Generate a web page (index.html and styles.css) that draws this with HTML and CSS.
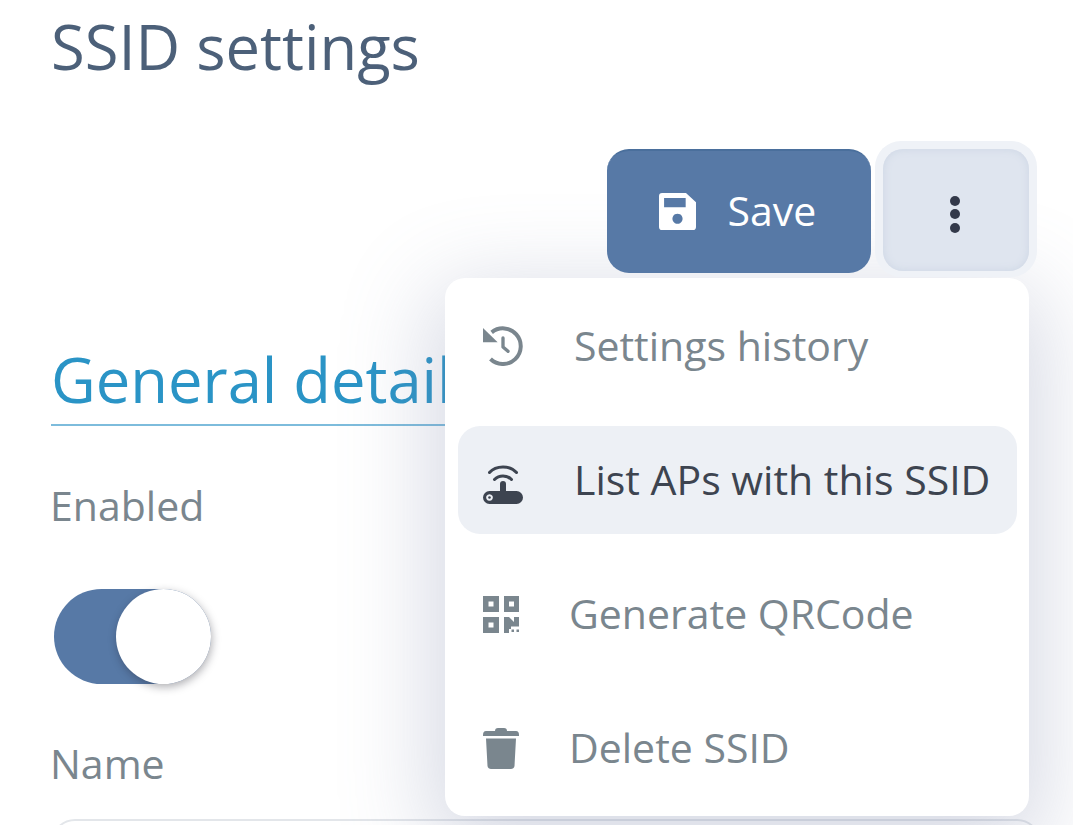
FILE: index.html
```html
<!DOCTYPE html>
<html lang="en">
<head>
<meta charset="utf-8">
<title>SSID settings</title>
<link rel="stylesheet" href="styles.css">
</head>
<body>
<main class="page">
  <h1 class="title">SSID settings</h1>
  <div class="actions">
    <button class="save" type="button">
      <svg class="save-icon" viewBox="0 0 24 24"><path fill-rule="evenodd" d="M2 0H17.500L24 6V22a2 2 0 0 1-2 2H2a2 2 0 0 1-2-2V2a2 2 0 0 1 2-2zM3.300 3.200V9.200H17.300V3.200zM12 13.400a3.300 3.300 0 1 0 .01 0z"/></svg>
      <span>Save</span>
    </button>
    <div class="more-ring">
      <button class="more" type="button" aria-label="More">
        <span class="dot"></span><span class="dot"></span><span class="dot"></span>
      </button>
    </div>
  </div>
  <div class="tab-row"><span class="tab">General details</span></div>
  <div class="label enabled-label">Enabled</div>
  <div class="switch"><span class="knob"></span></div>
  <div class="label name-label">Name</div>
  <div class="input"></div>

  <div class="menu">
    <div class="item">
      <svg class="icon" viewBox="0 0 24 24"><path fill="none" stroke="currentColor" stroke-width="2.400" d="M5.200 3.800A10.700 10.700 0 1 1 4.500 19.800"/><path d="M0 1.200L8.800 9.800H0z"/><path fill="none" stroke="currentColor" stroke-width="2" stroke-linecap="round" stroke-linejoin="round" d="M12 7.200V12.600L15 15.200"/></svg>
      <span class="item-text">Settings history</span>
    </div>
    <div class="item active">
      <svg class="icon router" viewBox="0 0 40 44"><path fill="none" stroke="currentColor" stroke-width="3" stroke-linecap="round" d="M6.500 12.500C13 5 27 5 33.500 12.500M11.500 19.500C16 14.800 24 14.800 28.500 19.500"/><path fill-rule="evenodd" d="M17 24a3 3 0 0 1 6 0V31H33.500a6.500 6.500 0 0 1 0 13H6.500a6.500 6.500 0 0 1 0-13H17zM6.500 34.200a3.300 3.300 0 1 0 .01 0z"/><circle cx="6.500" cy="37.500" r="1.300"/></svg>
      <span class="item-text">List APs with this SSID</span>
    </div>
    <div class="item shifted">
      <svg class="icon small" viewBox="0 0 36 37"><path fill-rule="evenodd" d="M0 0H16V16H0zM5.500 5.500V10.500H10.500V5.500zM21 0H36V16H21zM26 5.500V10.500H31V5.500zM0 21H16V37H0zM5.500 26.500V31.500H10.500V26.500zM21 21H26L31 26V21H36V30.500H28V33H26V37H21z"/><rect x="28.500" y="33.500" width="2.500" height="2.500"/><rect x="33.500" y="33.500" width="2.500" height="2.500"/></svg>
      <span class="item-text">Generate QRCode</span>
    </div>
    <div class="item shifted">
      <svg class="icon trash" viewBox="0 0 36 41"><path d="M12 3C12 1 13 0 15 0H21C23 0 24 1 24 3H33C35 3 36 4.500 36 7V8H0V7C0 4.500 1 3 3 3zM3 10.500H33L31.500 38C31.400 40 29.500 41 28 41H8C6.500 41 4.600 40 4.500 38z"/></svg>
      <span class="item-text">Delete SSID</span>
    </div>
  </div>
</main>
</body>
</html>
```

FILE: styles.css
```css
* { box-sizing: border-box; }
html, body { margin: 0; height: 100%; }
body {
  background: #fff;
  font-family: "Open Sans", "Noto Sans", sans-serif;
  overflow: hidden;
}
.page {
  position: relative;
  width: 1073px;
  height: 825px;
  overflow: hidden;
  padding: 0 44px 0 51px;
}
.title {
  margin: 11px 0 0;
  font-size: 61.500px;
  line-height: 70px;
  font-weight: 400;
  color: #4c6079;
  white-space: nowrap;
}
.actions {
  position: relative;
  z-index: 2;
  display: flex;
  justify-content: flex-end;
  align-items: flex-start;
  gap: 4px;
  margin: 60px -8px 0 0;
  height: 136px;
}
.save {
  display: flex;
  align-items: center;
  justify-content: center;
  gap: 32px;
  width: 264px;
  height: 124px;
  margin-top: 8px;
  border: 0;
  border-top: 2px solid #4a6f9c;
  border-radius: 22px;
  background: #5779a6;
  color: #fff;
  font: 400 41px "Open Sans", sans-serif;
  padding: 0 3px 4px 0;
}
.save-icon { width: 37px; height: 37px; fill: #fff; margin-top: 2px; }
.more-ring {
  padding: 8px 8px 6px;
  border-radius: 26px;
  background: #eff2f7;
}
.more {
  display: flex;
  flex-direction: column;
  align-items: center;
  justify-content: center;
  gap: 3.500px;
  width: 146px;
  height: 122px;
  border: 0;
  padding: 8px 2px 0 0;
  border-radius: 20px;
  background: #dfe5ef;
  box-shadow: inset 0 0 8px #ccd5e4;
}
.dot { width: 10px; height: 10px; border-radius: 50%; background: #33394a; }
.tab-row {
  margin-top: 75px;
  width: 400px;
  height: 74px;
  border-bottom: 2px solid #7dbcdc;
}
.tab {
  display: block;
  font-size: 61.500px;
  line-height: 54px;
  color: #2a94c6;
  white-space: nowrap;
}
.label {
  font-size: 41px;
  line-height: 50px;
  color: #7a868e;
}
.enabled-label { margin-top: 54px; margin-left: -1px; }
.switch {
  position: relative;
  width: 157px;
  height: 95px;
  margin: 59px 0 0 3px;
  border-radius: 48px;
  background: #5779a6;
}
.knob {
  position: absolute;
  top: 0;
  right: 0;
  width: 95px;
  height: 95px;
  border-radius: 50%;
  background: #fff;
  box-shadow: 1px 3px 8px rgba(30, 30, 40, .35);
}
.name-label { margin-top: 54px; margin-left: -1px; }
.input {
  width: 990px;
  height: 50px;
  margin-top: 31px;
  border: 2px solid #e3e6ea;
  border-radius: 24px;
}
.menu {
  position: absolute;
  left: 445px;
  top: 278px;
  width: 584px;
  height: 538px;
  padding: 14px 12px 13px 13px;
  display: flex;
  flex-direction: column;
  gap: 26px;
  background: #fff;
  border-radius: 20px;
  box-shadow: 0 24px 90px 14px rgba(120, 130, 165, .3);
}
.item {
  display: flex;
  align-items: center;
  gap: 52px;
  height: 108px;
  padding-left: 25px;
  border-radius: 22px;
  color: #7a868e;
  font-size: 41px;
  white-space: nowrap;
}
.item.active { background: #edf0f5; color: #3d4450; }
.item.shifted { gap: 51px; }
.icon { width: 40px; height: 40px; flex: none; fill: currentColor; }
.icon.router { height: 44px; margin-top: 4px; }
.icon.small { width: 36px; height: 37px; }
.icon.trash { width: 36px; height: 41px; }
.item-text { display: block; margin: -2px 0 0 -1px; }
```
